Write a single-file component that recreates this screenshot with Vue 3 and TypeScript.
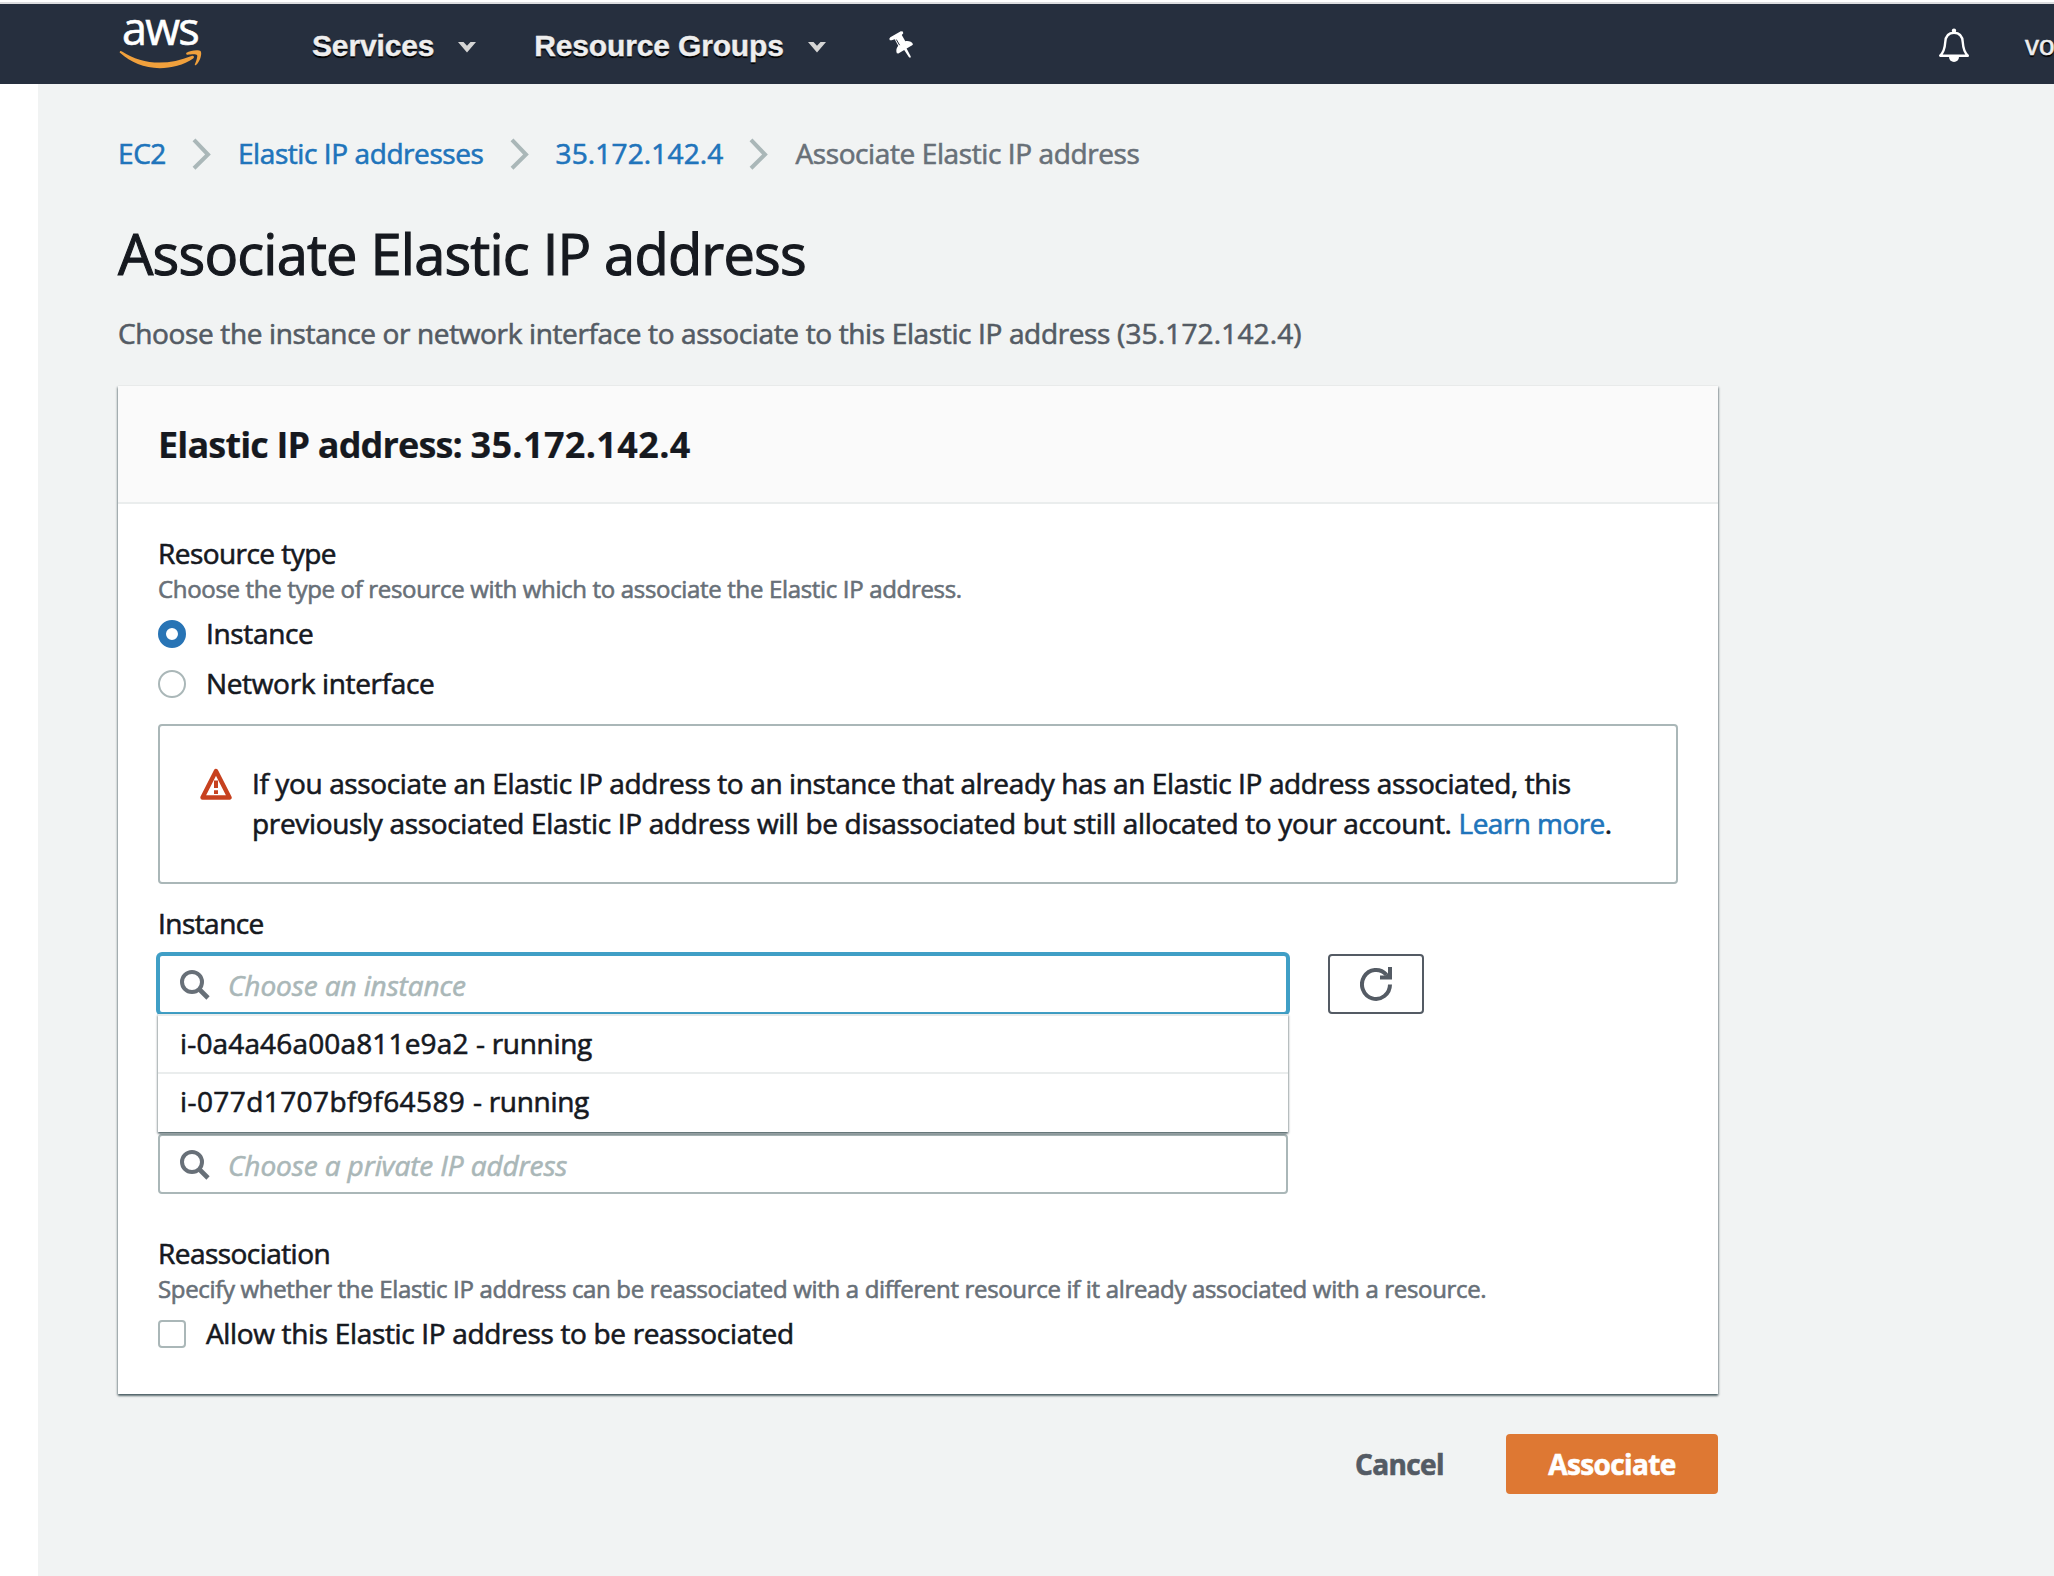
<script setup lang="ts">
import { ref } from 'vue'

interface Option {
  id: string
  state: string
}

const ip = '35.172.142.4'
const crumbs = ['EC2', 'Elastic IP addresses', ip]
const options: Option[] = [
  { id: 'i-0a4a46a00a811e9a2', state: 'running' },
  { id: 'i-077d1707bf9f64589', state: 'running' },
]
const resourceType = ref('instance')
</script>

<template>
  <div class="page">
    <header class="nav">
      <div class="logo">
        <span class="logo-text">aws</span>
        <svg class="smile" width="84" height="20" viewBox="0 0 84 20">
          <path d="M1 1.5C1.6 0.7 2.3 1 3 1.5C14 8.8 27 12.6 40.5 12.6C51 12.6 62 10.3 72.5 6C74.6 5.2 76 7 74.2 8.5C65 15 52 18.2 40.8 18.2C25 18.2 11.500 12.400 1.300 3.100C0.600 2.500 0.500 2 1 1.500Z" fill="#f0a03c" />
          <path d="M67.500 2.800C71 0.200 80 -0.800 81.700 1.200C83.200 3.300 81.200 11.500 77 15C76.300 15.600 75.500 15.200 75.900 14.300C76.900 11.800 79 6.400 78 5.100C77 3.800 71.500 4.500 68.800 4.800C67.500 5 66.700 3.500 67.500 2.800Z" fill="#f0a03c" />
        </svg>
      </div>
      <nav class="menus">
        <a class="menu services"><span>Services</span>
          <svg class="caret" width="18" height="11" viewBox="0 0 18 11"><path d="M0 0H5.500L9 3.800L12.500 0H18L9 10.500Z" fill="#d5d5d5" /></svg>
        </a>
        <a class="menu groups"><span>Resource Groups</span>
          <svg class="caret" width="18" height="11" viewBox="0 0 18 11"><path d="M0 0H5.500L9 3.800L12.500 0H18L9 10.500Z" fill="#d5d5d5" /></svg>
        </a>
        <svg class="pin" width="25" height="28" viewBox="0 0 25 28">
          <path d="M0.300 7.800L1.300 6.200L11.800 0.300L13.800 0.500L14.300 2.200L12.800 4L16.300 10.200C19.500 9.500 23 10.800 24 13.200L23.200 14.300L17.600 17.500L21.800 25.500L21.200 27L19.800 26L15.200 18.900L9.400 22.600L7.800 22.300C6.800 19.500 7.400 17 9.200 14.800L5.700 8.300L2.700 9.300L0.800 9.200Z" fill="#fff" />
          <path d="M7.300 8.500L10.600 14.200" stroke="#262f3e" stroke-width="1" />
        </svg>
      </nav>
      <svg class="bell" width="32" height="36" viewBox="0 0 32 36">
        <path d="M2.200 27.700H29.800C25.800 23.600 25.100 19.500 24.800 14.500C24.500 8.500 21.500 4.800 16 4.800C10.500 4.800 7.500 8.500 7.200 14.500C6.900 19.500 6.200 23.600 2.200 27.700Z" fill="none" stroke="#fff" stroke-width="2.400" stroke-linejoin="round" />
        <circle cx="16" cy="2.800" r="2.200" fill="#fff" />
        <path d="M11 29H21A5 5 0 0 1 11 29Z" fill="#fff" />
      </svg>
      <span class="account">vo</span>
    </header>

    <main class="content">
      <nav class="crumbs">
        <template v-for="c in crumbs" :key="c">
          <a class="link" :class="{ ip: c === ip }">{{ c }}</a>
          <svg class="sep" width="19" height="32" viewBox="0 0 19 32"><path d="M2 1.800L16 16.500L2 30.200" fill="none" stroke="#aab7b8" stroke-width="4" /></svg>
        </template>
        <span class="here">Associate Elastic IP address</span>
      </nav>

      <h1>Associate Elastic IP address</h1>
      <p class="lead">Choose the instance or network interface to associate to this Elastic IP address <span class="ip">({{ ip }})</span></p>

      <section class="card">
        <h2>Elastic IP address: <span class="ip">{{ ip }}</span></h2>
        <div class="body">
          <div class="label">Resource type</div>
          <div class="hint">Choose the type of resource with which to associate the Elastic IP address.</div>
          <label class="choice">
            <span class="radio" :class="{ on: resourceType === 'instance' }"></span><span>Instance</span>
          </label>
          <label class="choice second">
            <span class="radio" :class="{ on: resourceType === 'network' }"></span><span>Network interface</span>
          </label>

          <div class="alert">
            <svg class="warn" width="32" height="32" viewBox="0 0 32 32">
              <path d="M16 3L29.500 29.500H2.500Z" fill="none" stroke="#c7411f" stroke-width="4.400" stroke-linejoin="round" />
              <path d="M16 12.500V20M16 22.300V26" stroke="#c7411f" stroke-width="4" />
            </svg>
            <p>If you associate an Elastic IP address to an instance that already has an Elastic IP address associated, this<br>
              <span class="line">previously associated Elastic IP address will be disassociated but still allocated to your account. <a class="link">Learn more</a>.</span></p>
          </div>

          <div class="label instance-label">Instance</div>
          <div class="picker">
            <div class="combo">
              <div class="input focused">
                <svg class="search" width="30" height="30" viewBox="0 0 30 30"><circle cx="12" cy="12" r="10" fill="none" stroke="#687078" stroke-width="4" /><path d="M19 19L28 28" stroke="#687078" stroke-width="4.600" /></svg>
                <span class="ph">Choose an instance</span>
              </div>
              <ul class="menu-list">
                <li v-for="o in options" :key="o.id">{{ o.id }} <span class="state">- {{ o.state }}</span></li>
              </ul>
            </div>
            <button class="refresh" aria-label="Refresh">
              <svg width="32" height="34" viewBox="0 0 32 34">
                <path d="M30 17.500A14 14.500 0 1 1 26.300 7.600" fill="none" stroke="#545b64" stroke-width="4" />
                <path d="M28 0H32V12.500H20V8.500H25L28 6Z" fill="#545b64" />
              </svg>
            </button>
          </div>
          <div class="input private">
            <svg class="search" width="30" height="30" viewBox="0 0 30 30"><circle cx="12" cy="12" r="10" fill="none" stroke="#687078" stroke-width="4" /><path d="M19 19L28 28" stroke="#687078" stroke-width="4.600" /></svg>
            <span class="ph">Choose a private IP address</span>
          </div>

          <div class="label reassoc">Reassociation</div>
          <div class="hint">Specify whether the Elastic IP address can be reassociated with a different resource if it already associated with a resource.</div>
          <label class="choice allow">
            <span class="check"></span><span>Allow this Elastic IP address to be reassociated</span>
          </label>
        </div>
      </section>

      <footer class="actions">
        <button class="cancel">Cancel</button>
        <button class="primary">Associate</button>
      </footer>
    </main>
  </div>
</template>

<style>
body {
  margin: 0;
  background: #fff;
}
</style>

<style scoped>
* {
  box-sizing: border-box;
}
.page {
  width: 2054px;
  height: 1576px;
  padding-top: 2px;
  overflow: hidden;
  background: #fff;
  color: #16191f;
  font: 28px/40px "Open Sans", "Noto Sans", sans-serif;
  letter-spacing: -0.33px;
  -webkit-text-stroke: 0.6px;
}
.nav {
  display: flex;
  height: 82px;
  border-top: 2px solid #dcdddf;
  background: #262f3e;
}
.logo {
  width: 84px;
  margin-left: 119px;
  flex: none;
}
.logo-text {
  display: block;
  height: 48px;
  padding-left: 3px;
  color: #fff;
  font-size: 45px;
  line-height: 48px;
  letter-spacing: -1.8px;
}
.smile {
  display: block;
  margin-top: -2px;
}
.menus {
  display: flex;
  font: bold 30px/83px "Liberation Sans", Arial, sans-serif;
  letter-spacing: -0.15px;
  -webkit-text-stroke: 0.4px;
  color: #eee;
  text-shadow: 0 2px 1px #000;
}
.menu {
  display: flex;
}
.services {
  margin-left: 109px;
}
.groups {
  margin-left: 58px;
}
.caret {
  margin: 38px 0 0 24px;
}
.pin {
  margin: 27px 0 0 63px;
}
.bell {
  margin: 24px 0 0 auto;
}
.account {
  width: 29px;
  margin-left: 55px;
  font: 28px/83px "Liberation Sans", Arial, sans-serif;
  letter-spacing: 0;
  color: #eee;
  text-shadow: 0 2px 1px #000;
}
.content {
  height: 1492px;
  margin-left: 38px;
  padding: 49px 336px 0 80px;
  background: #f1f3f3;
}
.crumbs {
  display: flex;
}
.link {
  color: #2074bb;
}
.crumbs .link {
  letter-spacing: -0.42px;
}
.crumbs .ip {
  letter-spacing: 0.15px;
}
.sep {
  margin: 5px 27px 0 26px;
}
.here {
  color: #687078;
  letter-spacing: -0.4px;
}
h1 {
  margin: 44px 0 0;
  font-size: 56px;
  line-height: 72px;
  font-weight: 400;
  letter-spacing: -0.8px;
  -webkit-text-stroke: 1.1px;
}
.lead {
  margin: 24px 0 0;
  color: #545b64;
  letter-spacing: -0.36px;
}
.lead .ip {
  letter-spacing: 0.15px;
}
.card {
  height: 1008px;
  margin-top: 33px;
  background: #fff;
  box-shadow: 0 2px 2px 0 rgba(0, 28, 36, 0.5), 1px 1px 2px 0 rgba(0, 28, 36, 0.25), -1px 1px 2px 0 rgba(0, 28, 36, 0.25);
}
h2 {
  height: 118px;
  margin: 0;
  padding-left: 40px;
  border-bottom: 2px solid #eaeded;
  background: #fafafa;
  font-size: 36px;
  line-height: 118px;
  font-weight: 700;
  letter-spacing: -0.85px;
  -webkit-text-stroke: 0.2px;
}
h2 .ip {
  letter-spacing: 0.35px;
}
.body {
  padding: 29px 40px 0;
}
.label {
  letter-spacing: -0.55px;
}
.hint {
  color: #687078;
  font-size: 24px;
  line-height: 32px;
}
.choice {
  display: flex;
  margin-top: 8px;
  letter-spacing: -0.34px;
}
.choice.second {
  margin-top: 10px;
}
.radio,
.check {
  width: 28px;
  height: 28px;
  margin: 7px 20px 0 0;
  border: 2px solid #aab7b8;
  border-radius: 50%;
}
.radio.on {
  border: 8px solid #2874b5;
}
.check {
  border-radius: 4px;
}
.alert {
  display: flex;
  height: 160px;
  margin-top: 21px;
  padding: 37px 0 0 40px;
  border: 2px solid #aab7b8;
  border-radius: 4px;
}
.warn {
  margin: 5px 20px 0 0;
}
.alert p {
  margin: 0;
  letter-spacing: -0.38px;
  white-space: nowrap;
}
.alert .line {
  letter-spacing: -0.33px;
}
.alert .link {
  letter-spacing: -0.55px;
}
.instance-label {
  margin-top: 19px;
}
.picker {
  display: flex;
  gap: 40px;
  margin-top: 11px;
}
.combo {
  position: relative;
  width: 1130px;
  height: 60px;
}
.input {
  display: flex;
  width: 1130px;
  height: 60px;
  padding: 14px 0 0 20px;
  border: 2px solid #aab7b8;
  border-radius: 4px;
  background: #fff;
}
.focused {
  border-color: #409fc6;
  box-shadow: 0 0 0 2px #409fc6;
}
.ph {
  margin: -5px 0 0 18px;
  color: #aab7b8;
  font-style: italic;
  letter-spacing: -0.1px;
}
.menu-list {
  position: absolute;
  top: 60px;
  left: 0;
  z-index: 1;
  width: 1130px;
  height: 118px;
  margin: 0;
  padding: 0;
  list-style: none;
  background: #fff;
  letter-spacing: 0.15px;
  box-shadow: 0 2px 2px 0 rgba(0, 28, 36, 0.5), 1px 1px 2px 0 rgba(0, 28, 36, 0.2), -1px 1px 2px 0 rgba(0, 28, 36, 0.2);
}
.menu-list li {
  height: 58px;
  padding: 7px 22px;
  border-top: 2px solid #eaeded;
}
.menu-list li:last-child {
  letter-spacing: 0.42px;
}
.menu-list .state {
  letter-spacing: -0.3px;
}
.refresh {
  display: flex;
  align-items: center;
  justify-content: center;
  width: 96px;
  height: 60px;
  padding: 0;
  border: 2px solid #545b64;
  border-radius: 4px;
  background: #fff;
}
.private {
  margin-top: 120px;
}
.reassoc {
  margin-top: 39px;
}
.actions {
  display: flex;
  justify-content: flex-end;
  margin-top: 40px;
}
.actions button {
  height: 60px;
  padding: 0 0 1px;
  border: 0;
  border-radius: 4px;
  background: none;
  color: #545b64;
  font: 700 28px/40px "Open Sans", "Noto Sans", sans-serif;
  letter-spacing: -0.6px;
}
.actions .cancel {
  margin-right: 62px;
}
.actions .primary {
  width: 212px;
  background: #de7833;
  color: #fff;
}
</style>
